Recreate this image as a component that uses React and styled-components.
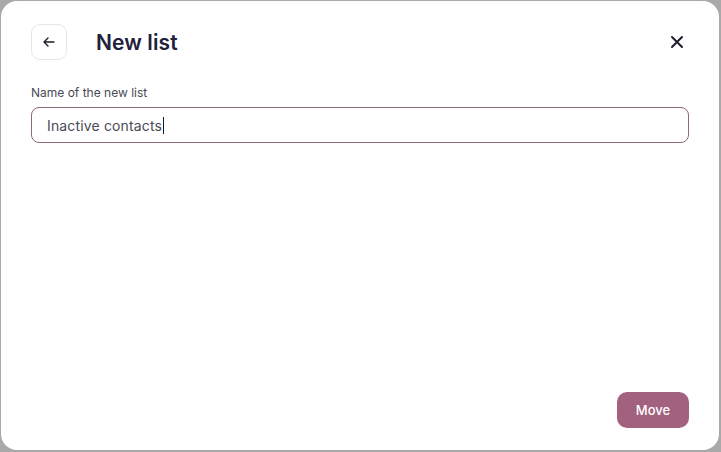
import React from "react";
import styled, { createGlobalStyle } from "styled-components";

const Global = createGlobalStyle`
  html, body { margin: 0; padding: 0; background: #a9a9a9; }
  body { font-family: Inter, "Noto Sans", sans-serif; }
  * { box-sizing: border-box; }
`;

const Backdrop = styled.div`
  width: 721px;
  height: 452px;
  padding: 1px 2px 2px 1px;
  background: #a9a9a9;
`;

const Modal = styled.div`
  width: 100%;
  height: 100%;
  background: #fff;
  border-radius: 16px;
  display: flex;
  flex-direction: column;
  padding: 23px 30px 22px 30px;
`;

const Header = styled.div`
  display: flex;
  align-items: center;
  height: 36px;
`;

const IconButton = styled.button`
  width: 36px;
  height: 36px;
  border: 1px solid #e6e6ea;
  border-radius: 9px;
  background: #fff;
  display: flex;
  align-items: center;
  justify-content: center;
  padding: 0;
  color: #1f1d2b;
  cursor: pointer;
`;

const Title = styled.h1`
  margin: 0 0 0 29px;
  font-size: 21px;
  font-weight: 600;
  color: #22203a;
  flex: 1;
  letter-spacing: 0.1px;
`;

const CloseButton = styled.button`
  border: none;
  background: none;
  padding: 0;
  width: 24px;
  height: 24px;
  display: flex;
  align-items: center;
  justify-content: center;
  color: #1f1d2b;
  cursor: pointer;
`;

const Field = styled.div`
  margin-top: 25px;
  display: flex;
  flex-direction: column;
  gap: 7px;
`;

const Label = styled.label`
  font-size: 12px;
  color: #4a4a55;
`;

const InputBox = styled.div`
  height: 36px;
  border: 1px solid #8e6a7c;
  border-radius: 8px;
  display: flex;
  align-items: center;
  padding: 0 15px;
  font-size: 14px;
  color: #4a4a55;
  letter-spacing: 0.15px;
`;

const Caret = styled.span`
  display: inline-block;
  width: 1px;
  height: 17px;
  background: #1a1a1a;
  margin-left: 1px;
`;

const Spacer = styled.div`
  flex: 1;
`;

const Footer = styled.div`
  display: flex;
  justify-content: flex-end;
`;

const PrimaryButton = styled.button`
  width: 72px;
  height: 36px;
  border: none;
  border-radius: 10px;
  background: #a2617f;
  color: #fff;
  font-family: Inter, "Noto Sans", sans-serif;
  font-size: 13px;
  font-weight: 500;
  cursor: pointer;
`;

export default function App() {
  return (
    <>
      <Global />
      <Backdrop>
        <Modal>
          <Header>
            <IconButton aria-label="Back">
              <svg width="14" height="14" viewBox="0 0 14 14" fill="none" stroke="currentColor" strokeWidth="1.4" strokeLinecap="round" strokeLinejoin="round">
                <path d="M12 7H2M6 3L2 7l4 4" />
              </svg>
            </IconButton>
            <Title>New list</Title>
            <CloseButton aria-label="Close">
              <svg width="14" height="14" viewBox="0 0 14 14" fill="none" stroke="currentColor" strokeWidth="2" strokeLinecap="round">
                <path d="M2 2l10 10M12 2L2 12" />
              </svg>
            </CloseButton>
          </Header>
          <Field>
            <Label>Name of the new list</Label>
            <InputBox>
              Inactive contacts<Caret />
            </InputBox>
          </Field>
          <Spacer />
          <Footer>
            <PrimaryButton>Move</PrimaryButton>
          </Footer>
        </Modal>
      </Backdrop>
    </>
  );
}
